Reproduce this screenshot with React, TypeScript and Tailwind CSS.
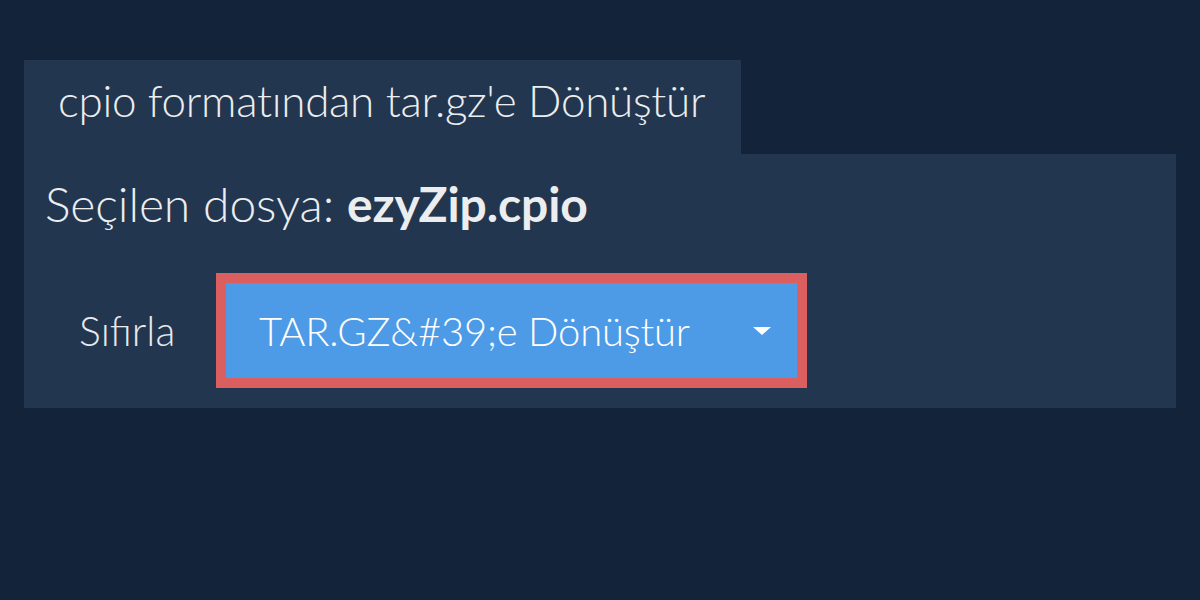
export default function App() {
  return (
    <div className="w-[1200px] h-[600px] bg-[#12233a] pt-[60px] px-6 font-['Lato','Liberation_Sans',sans-serif] text-[#ecedef]">
      <div className="w-[717px] h-[94px] bg-[#223650] pl-[34px] pt-[18px]">
        <h1 className="text-[44px] font-light leading-none tracking-[-0.3px]">cpio formatından tar.gz'e Dönüştür</h1>
      </div>
      <div className="bg-[#223650] h-[254px] pl-[21px] pt-[22px]">
        <p className="text-[48px] font-light leading-[56px] tracking-[-0.1px]">
          Seçilen dosya: <span className="font-bold">ezyZip.cpio</span>
        </p>
        <div className="flex items-center mt-[41px] -ml-[21px]">
          <button className="w-[192px] h-[115px] text-[41px] font-light text-[#e8e9ec] pl-[55px] text-left">Sıfırla</button>
          <div className="border-[10px] border-[#db5f5e] w-[591px] h-[115px]">
            <div className="bg-[#4d9be6] h-full flex items-center justify-between pl-[33px] pr-[26px] text-white">
              <span className="text-[40px] font-light tracking-[-0.2px]">TAR.GZ&amp;#39;e Dönüştür</span>
              <svg width="18" height="8" viewBox="0 0 18 8"><path d="M0 0h18L9 8z" fill="#fff" /></svg>
            </div>
          </div>
        </div>
      </div>
    </div>
  );
}
